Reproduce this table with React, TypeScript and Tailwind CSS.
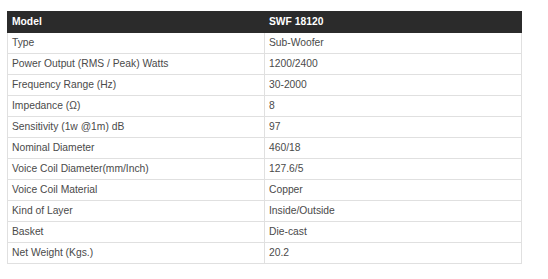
// Spec table for the SWF 18120 sub-woofer

const rows: [string, string][] = [
  ["Type", "Sub-Woofer"],
  ["Power Output (RMS / Peak) Watts", "1200/2400"],
  ["Frequency Range (Hz)", "30-2000"],
  ["Impedance (Ω)", "8"],
  ["Sensitivity (1w @1m) dB", "97"],
  ["Nominal Diameter", "460/18"],
  ["Voice Coil Diameter(mm/Inch)", "127.6/5"],
  ["Voice Coil Material", "Copper"],
  ["Kind of Layer", "Inside/Outside"],
  ["Basket", "Die-cast"],
  ["Net Weight (Kgs.)", "20.2"],
];

export default function App() {
  return (
    <div className="w-[548px] h-[279px] bg-white pt-[11px] pl-[7px] font-['Liberation_Sans',Arial,sans-serif] text-[10.3px] leading-none">
      <table className="w-[515px] border-collapse table-fixed">
        <colgroup>
          <col className="w-[257px]" />
          <col />
        </colgroup>
        <thead>
          <tr className="h-[21px] bg-[#2b2b2b] text-white font-bold">
            <th className="border border-[#2b2b2b] px-[4px] text-left">Model</th>
            <th className="border border-y-[#2b2b2b] border-r-[#2b2b2b] border-l-[#dcdcdc] px-[4px] text-left">SWF 18120</th>
          </tr>
        </thead>
        <tbody className="text-[#4a4a4a]">
          {rows.map(([label, value]) => (
            <tr key={label} className="h-[21px]">
              <td className="border border-[#e0e0e0] px-[4px]">{label}</td>
              <td className="border border-[#e0e0e0] px-[4px]">{value}</td>
            </tr>
          ))}
        </tbody>
      </table>
    </div>
  );
}
